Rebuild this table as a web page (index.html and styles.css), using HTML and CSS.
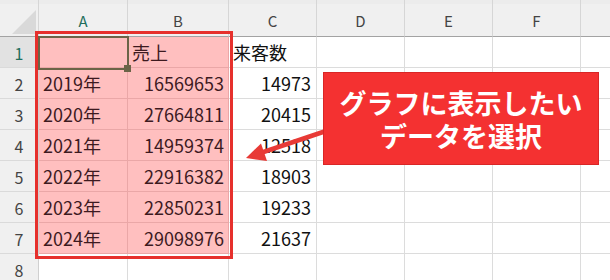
FILE: index.html
```html
<!DOCTYPE html>
<html lang="ja">
<head>
<meta charset="utf-8">
<link rel="stylesheet" href="styles.css">
</head>
<body>
<div class="page">
  <div class="sheet">
    <div class="hd corner"><span class="tri"></span></div>
    <div class="hd col sel-col">A</div>
    <div class="hd col">B</div>
    <div class="hd col">C</div>
    <div class="hd col">D</div>
    <div class="hd col">E</div>
    <div class="hd col">F</div>
    <div class="hd col last"></div>

    <div class="rh active-row">1</div>
    <div class="c p"></div>
    <div class="c p">売上</div>
    <div class="c">来客数</div>
    <div class="c"></div><div class="c"></div><div class="c"></div><div class="c"></div>

    <div class="rh">2</div>
    <div class="c p">2019年</div>
    <div class="c p r">16569653</div>
    <div class="c r">14973</div>
    <div class="c"></div><div class="c"></div><div class="c"></div><div class="c"></div>

    <div class="rh">3</div>
    <div class="c p">2020年</div>
    <div class="c p r">27664811</div>
    <div class="c r">20415</div>
    <div class="c"></div><div class="c"></div><div class="c"></div><div class="c"></div>

    <div class="rh">4</div>
    <div class="c p">2021年</div>
    <div class="c p r">14959374</div>
    <div class="c r">12518</div>
    <div class="c"></div><div class="c"></div><div class="c"></div><div class="c"></div>

    <div class="rh">5</div>
    <div class="c p">2022年</div>
    <div class="c p r">22916382</div>
    <div class="c r">18903</div>
    <div class="c"></div><div class="c"></div><div class="c"></div><div class="c"></div>

    <div class="rh">6</div>
    <div class="c p">2023年</div>
    <div class="c p r">22850231</div>
    <div class="c r">19233</div>
    <div class="c"></div><div class="c"></div><div class="c"></div><div class="c"></div>

    <div class="rh">7</div>
    <div class="c p">2024年</div>
    <div class="c p r">29098976</div>
    <div class="c r">21637</div>
    <div class="c"></div><div class="c"></div><div class="c"></div><div class="c"></div>

    <div class="rh">8</div>
    <div class="c"></div><div class="c"></div><div class="c"></div>
    <div class="c"></div><div class="c"></div><div class="c"></div><div class="c"></div>
  </div>

  <div class="active-cell"><span class="handle"></span></div>
  <div class="range-box"></div>

  <svg class="arrow" width="610" height="280" viewBox="0 0 610 280">
    <line x1="326" y1="131" x2="262" y2="152.5" stroke="#e83a36" stroke-width="4.5"/>
    <polygon points="246,158 261,143.5 267,161" fill="#e83a36"/>
  </svg>

  <div class="callout">
    <div class="callout-line">グラフに表示したい</div>
    <div class="callout-line">データを選択</div>
  </div>
</div>
</body>
</html>
```
FILE: styles.css
```css
* { box-sizing: border-box; }
html, body { margin: 0; padding: 0; background: #ffffff; }
body {
  width: 610px;
  height: 280px;
  overflow: hidden;
  font-family: "Noto Sans CJK JP", "Noto Sans", sans-serif;
}
.page { position: relative; width: 610px; height: 280px; overflow: hidden; }

.sheet {
  display: grid;
  grid-template-columns: 39px 89px 101px 88px 88px 88px 88px 40px;
  grid-template-rows: 37px repeat(8, 31px);
  width: 631px;
}

.hd {
  background: linear-gradient(#ececec 0, #ececec 4px, #f0f0f0 4px);
  border-right: 1px solid #d6d6d6;
  border-bottom: 1px solid #a3a3a3;
  display: flex;
  align-items: center;
  justify-content: center;
  padding-top: 4px;
  font-size: 15px;
  color: #444;
}
.corner { position: relative; border-right-color: #d6d6d6; }
.tri {
  position: absolute;
  left: 12px;
  top: 10px;
  width: 24px;
  height: 24px;
  background: #d9d9d9;
  clip-path: polygon(100% 0, 100% 100%, 0 100%);
}
.sel-col { color: #1f6e5c; }

.rh {
  background: #f0f0f0;
  border-right: 1px solid #d0d0d0;
  border-bottom: 1px solid #dadada;
  display: flex;
  align-items: center;
  justify-content: center;
  font-size: 16px;
  color: #444;
  padding-top: 2px;
}
.active-row { background: #e2e2e2; color: #1f6e5c; }

.c {
  border-right: 1px solid #dcdcdc;
  border-bottom: 1px solid #dcdcdc;
  font-size: 18px;
  line-height: 31px;
  padding: 0 4px 0 4px;
  color: #111;
  white-space: nowrap;
}
.c.r { text-align: right; padding-right: 5px; }
.c.p {
  background: #ffbfbf;
  border-color: #eaa7a7;
  color: #3d1a1f;
}
.c.p.r { padding-right: 4px; }

.active-cell {
  position: absolute;
  left: 38px;
  top: 36px;
  width: 91px;
  height: 34px;
  border: 2px solid #6b6447;
}
.handle {
  position: absolute;
  right: -4px;
  bottom: -4px;
  width: 7px;
  height: 7px;
  background: #6b6447;
}

.range-box {
  position: absolute;
  left: 35px;
  top: 31px;
  width: 198px;
  height: 228px;
  border: 3px solid #e6302c;
}

.arrow { position: absolute; left: 0; top: 0; }

.callout {
  position: absolute;
  left: 323px;
  top: 72px;
  width: 276px;
  height: 93px;
  background: #f43131;
  border: 1px solid #d92626;
  display: flex;
  flex-direction: column;
  align-items: center;
  justify-content: center;
  color: #ffffff;
  font-weight: 700;
  font-size: 27px;
}
.callout-line {
  white-space: nowrap;
  height: 33px;
  line-height: 33px;
  overflow: visible;
}
```
